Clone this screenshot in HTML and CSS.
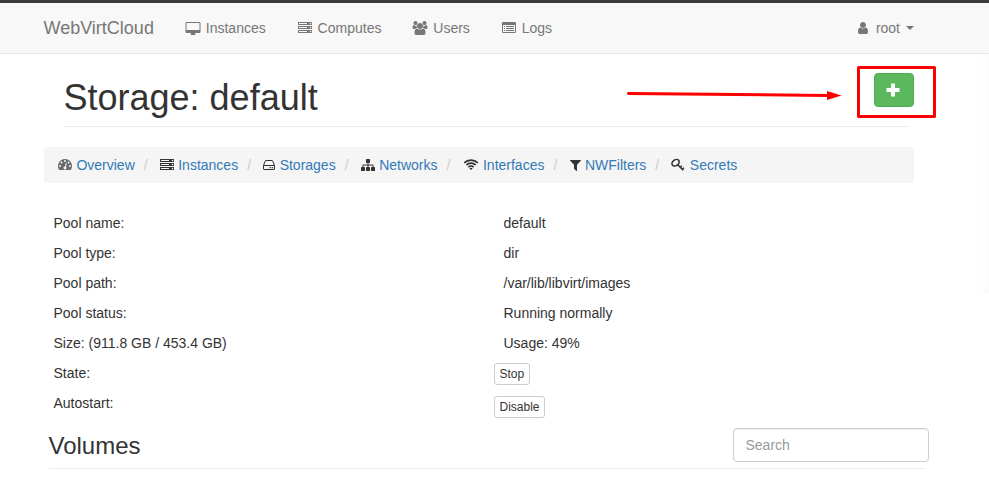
FILE: index.html
```html
<!DOCTYPE html>
<html lang="en">
<head>
<meta charset="utf-8">
<title>WebVirtCloud</title>
<link rel="stylesheet" href="styles.css">
</head>
<body>
<svg class="symbols" aria-hidden="true">
  <symbol id="server" viewBox="0 0 1792 1792"><path d="M128 1408h1024v-128h-1024v128zm0-512h1024v-128h-1024v128zm1568 448q0-40-28-68t-68-28-68 28-28 68 28 68 68 28 68-28 28-68zm-1568-960h1024v-128h-1024v128zm1568 448q0-40-28-68t-68-28-68 28-28 68 28 68 68 28 68-28 28-68zm0-512q0-40-28-68t-68-28-68 28-28 68 28 68 68 28 68-28 28-68zm96 832v384h-1792v-384h1792zm0-512v384h-1792v-384h1792zm0-512v384h-1792v-384h1792z"/></symbol>
</svg>
<nav class="navbar">
  <a class="brand">WebVirtCloud</a>
  <ul class="menu">
    <li><svg class="icon fixed" viewBox="0 0 1920 1792"><path transform="translate(64 128)" d="M1728 992v-832q0-13-9.500-22.500t-22.500-9.500h-1600q-13 0-22.500 9.500t-9.500 22.500v832q0 13 9.500 22.500t22.500 9.500h1600q13 0 22.500-9.500t9.500-22.500zm128-832v1088q0 66-47 113t-113 47h-544q0 37 16 77.500t32 71 16 43.500q0 26-19 45t-45 19h-512q-26 0-45-19t-19-45q0-14 16-44t32-70 16-78h-544q-66 0-113-47t-47-113v-1088q0-66 47-113t113-47h1600q66 0 113 47t47 113z"/></svg> Instances</li>
    <li><svg class="icon fixed"><use href="#server"/></svg> Computes</li>
    <li><svg class="icon fixed" viewBox="0 0 1920 1792"><path d="M593 896q-162 5-265 128h-134q-82 0-138-40.500t-56-118.500q0-353 124-353 6 0 43.500 21t97.500 42.500 119 21.500q67 0 133-23-5 37-5 66 0 139 81 256zm1071 637q0 120-73 189.500t-194 69.500h-874q-121 0-194-69.500t-73-189.500q0-53 3.500-103.500t14-109 26.500-108.500 43-97.500 62-81 85.500-53.500 111.500-20q10 0 43 21.500t73 48 107 48 135 21.500 135-21.500 107-48 73-48 43-21.500q61 0 111.500 20t85.500 53.500 62 81 43 97.500 26.500 108.500 14 109 3.500 103.500zm-1024-1277q0 106-75 181t-181 75-181-75-75-181 75-181 181-75 181 75 75 181zm704 384q0 159-112.500 271.500t-271.500 112.500-271.500-112.500-112.500-271.500 112.500-271.500 271.500-112.500 271.500 112.500 112.500 271.500zm576 225q0 78-56 118.500t-138 40.500h-134q-103-123-265-128 81-117 81-256 0-29-5-66 66 23 133 23 59 0 119-21.500t97.500-42.500 43.500-21q124 0 124 353zm-128-609q0 106-75 181t-181 75-181-75-75-181 75-181 181-75 181 75 75 181z"/></svg> Users</li>
    <li><svg class="icon fixed" viewBox="0 0 14 14"><path fill-rule="evenodd" d="M1.200 1h11.600q1.200 0 1.200 1.200v8.600q0 1.200-1.200 1.200h-11.600q-1.200 0-1.200-1.200v-8.600q0-1.200 1.200-1.200zM1 4v6.800q0 .2.200.2h11.600q.2 0 .2-.2v-6.800zM2 5h1v1h-1zM4 5h8v1h-8zM2 7h1v1h-1zM4 7h8v1h-8zM2 9h1v1h-1zM4 9h8v1h-8z"/></svg> Logs</li>
  </ul>
  <div class="account"><svg class="icon w10" viewBox="256 0 1280 1792"><path d="M1536 1399q0 109-62.500 187t-150.500 78h-854q-88 0-150.500-78t-62.500-187q0-85 8.500-160.500t31.500-152 58.500-131 94-89 134.500-34.500q131 128 313 128t313-128q76 0 134.500 34.500t94 89 58.500 131 31.500 152 8.500 160.500zm-256-887q0 159-112.500 271.500t-271.500 112.500-271.500-112.500-112.500-271.500 112.500-271.500 271.500-112.500 271.500 112.500 112.500 271.500z"/></svg><span class="account-name">root</span><span class="caret"></span></div>
</nav>
<main>
  <header class="page-header">
    <h1>Storage: default</h1>
    <button class="btn-add" aria-label="Add volume"><svg width="14" height="14" viewBox="0 0 14 14"><path d="M5 .5h4v4.500h4.500v4h-4.500v4.500h-4v-4.500h-4.500v-4h4.500z"/></svg></button>
  </header>
  <ol class="breadcrumb">
    <li><svg class="icon w14 muted" viewBox="0 0 14 14"><path fill-rule="evenodd" d="M7 1a7 7 0 0 1 5.900 10.760q-.2.240-.5.240h-10.800q-.3 0-.5-.240a7 7 0 0 1 5.900-10.760zM1 8a1 1 0 1 0 2 0a1 1 0 1 0-2 0zM2.500 4.500a1 1 0 1 0 2 0a1 1 0 1 0-2 0zM6 3a1 1 0 1 0 2 0a1 1 0 1 0-2 0zM9.500 4.500a1 1 0 1 0 2 0a1 1 0 1 0-2 0zM11 8a1 1 0 1 0 2 0a1 1 0 1 0-2 0zM7.700 5.400l-.8 3a1.500 1.500 0 1 0 1 .3l.8-3q0-.5-.4-.6t-.6.300z"/></svg> <a>Overview</a></li>
    <li><svg class="icon w14"><use href="#server"/></svg> <a>Instances</a></li>
    <li><svg class="icon w12" viewBox="0 0 12 14"><path fill="none" stroke="currentColor" d="M.5 7.500v3.500q0 .500.500.500h10q.500 0 .500-.500v-3.500zl1.700-4.500q.2-.5.800-.5h6q.6 0 .8.500l1.700 4.500"/><path d="M6.500 9h1.200v1.200h-1.200zM8.700 9h1.200v1.200h-1.200z"/></svg> <a>Storages</a></li>
    <li><svg class="icon w14" viewBox="0 0 1792 1792"><path d="M1792 1248v320q0 40-28 68t-68 28h-320q-40 0-68-28t-28-68v-320q0-40 28-68t68-28h96v-192h-512v192h96q40 0 68 28t28 68v320q0 40-28 68t-68 28h-320q-40 0-68-28t-28-68v-320q0-40 28-68t68-28h96v-192h-512v192h96q40 0 68 28t28 68v320q0 40-28 68t-68 28h-320q-40 0-68-28t-28-68v-320q0-40 28-68t68-28h96v-192q0-52 38-90t90-38h512v-192h-96q-40 0-68-28t-28-68v-320q0-40 28-68t68-28h320q40 0 68 28t28 68v320q0 40-28 68t-68 28h-96v192h512q52 0 90 38t38 90v192h96q40 0 68 28t28 68z"/></svg> <a>Networks</a></li>
    <li><svg class="icon w16" viewBox="0 0 15 14"><g fill="none" stroke="currentColor" stroke-width="1.700"><path d="M.7 4.900a9.600 9.600 0 0 1 13.600 0"/><path d="M2.800 7a6.600 6.600 0 0 1 9.400 0"/><path d="M4.900 9.100a3.700 3.700 0 0 1 5.200 0"/></g><path d="M7.500 12l-1.600-1.600a2.300 2.300 0 0 1 3.200 0z"/></svg> <a>Interfaces</a></li>
    <li><svg class="icon w11" viewBox="192 0 1408 1792"><path d="M1595 295q17 41-14 70l-493 493v742q0 42-39 59-13 5-25 5-27 0-45-19l-256-256q-19-19-19-45v-486l-493-493q-31-29-14-70 17-39 59-39h1280q42 0 59 39z"/></svg> <a>NWFilters</a></li>
    <li><svg class="icon w14" viewBox="0 0 14 14"><g fill="none" stroke="currentColor" stroke-width="1.600"><ellipse cx="4.600" cy="4.700" rx="3.900" ry="2.900" transform="rotate(-35 4.600 4.700)"/><path d="M6.500 6.500l5.800 5.800M8.700 9.800l2.100-2.100M10.800 11.900l2.100-2.100"/></g></svg> <a>Secrets</a></li>
  </ol>
  <dl class="details">
    <dt>Pool name:</dt><dd>default</dd>
    <dt>Pool type:</dt><dd>dir</dd>
    <dt>Pool path:</dt><dd>/var/lib/libvirt/images</dd>
    <dt>Pool status:</dt><dd>Running normally</dd>
    <dt>Size: (911.8 GB / 453.4 GB)</dt><dd>Usage: 49%</dd>
    <dt>State:</dt><dd class="action"><button class="btn-xs">Stop</button></dd>
    <dt>Autostart:</dt><dd class="action last"><button class="btn-xs">Disable</button></dd>
  </dl>
  <section class="volumes">
    <h2>Volumes</h2>
    <input class="search" type="text" placeholder="Search">
  </section>
</main>
<div class="edge-shade"></div>
<svg class="callout" width="989" height="130" viewBox="0 0 989 130" aria-hidden="true">
  <path class="callout-line" d="M628.500 93.500L828 95.500"/>
  <path class="callout-head" d="M827 91l14.500 4.600L827 100z"/>
  <rect class="callout-line" x="858.500" y="67.500" width="76" height="49"/>
</svg>
</body>
</html>
```
FILE: styles.css
```css
* { box-sizing: border-box; }
body {
  margin: 0;
  height: 496px;
  overflow: hidden;
  background: #fff;
  color: #333;
  font: 14px/20px "Liberation Sans", Arial, sans-serif;
}
ul, ol, dl, dd, h1, h2 { margin: 0; padding: 0; list-style: none; font-weight: 400; }
.symbols { position: absolute; width: 0; height: 0; }
.icon { height: 14px; vertical-align: -2px; fill: currentColor; overflow: visible; }
.w10 { width: 10px; }
.w11 { width: 11px; }
.w12 { width: 12px; }
.w14 { width: 14px; }
.w16 { width: 16px; }
.fixed { width: 18px; }
.muted { color: #6b6b6b; }

.navbar {
  display: flex;
  height: 54px;
  padding: 0 75px 0 43.500px;
  border-top: 3px solid #3c3a3b;
  border-bottom: 1px solid #e7e7e7;
  background: #f8f8f8;
  color: #777;
}
.brand { padding: 15px 15px 15px 0; font-size: 18px; }
.menu { display: flex; }
.menu li { padding: 15px; white-space: nowrap; }
.account { display: flex; align-items: center; margin-left: auto; }
.account-name { margin: 0 6px 0 8px; }
.caret { border-top: 4px solid; border-left: 4px solid transparent; border-right: 4px solid transparent; }

.page-header {
  display: flex;
  justify-content: space-between;
  height: 73px;
  width: 846px;
  margin-left: 63.500px;
  border-bottom: 1px solid #eee;
}
.page-header h1 { padding-top: 24px; font-size: 36px; line-height: 40px; }
.btn-add {
  display: flex;
  align-items: center;
  justify-content: center;
  width: 40px;
  height: 34px;
  margin: 19px -4.500px 0 0;
  padding: 0 2px 1px 0;
  border: 1px solid #4cae4c;
  border-radius: 4px;
  background: #5cb85c;
  fill: #fff;
}
.breadcrumb {
  display: flex;
  width: 870px;
  height: 36px;
  margin: 20px 0 0 44px;
  padding: 8px 14px;
  border-radius: 4px;
  background: #f5f5f5;
}
.breadcrumb li { white-space: nowrap; }
.breadcrumb .icon { margin-right: .5px; }
.breadcrumb li + li::before { content: "/"; padding: 0 12.200px 0 9px; color: #ccc; }
.breadcrumb a { color: #337ab7; }

.details {
  display: grid;
  grid-template-columns: 450px 400px;
  grid-auto-rows: 30px;
  margin: 30px 0 0 53.500px;
}
.action { display: flex; align-items: flex-start; margin-left: -9.500px; }
.last { padding-top: 3px; }
.btn-xs {
  height: 22px;
  padding: 1px 4.500px;
  border: 1px solid #ccc;
  border-radius: 3px;
  background: #fff;
  color: #333;
  font: 12px/18px "Liberation Sans", Arial, sans-serif;
}
.volumes {
  display: flex;
  justify-content: space-between;
  width: 876px;
  height: 46px;
  margin: 0 0 0 48.500px;
  border-bottom: 1px solid #eee;
}
.volumes h2 { padding-top: 9px; font-size: 24px; line-height: 28px; }
.search {
  width: 196px;
  height: 34px;
  margin: 5px -4.500px 0 0;
  padding: 6px 11.500px;
  border: 1px solid #ccc;
  border-radius: 4px;
  box-shadow: inset 0 1px 1px rgba(0, 0, 0, .075);
  font: inherit;
}
.search::placeholder { color: #999; }

.edge-shade {
  position: absolute;
  right: 0;
  top: 54px;
  width: 10px;
  height: 240px;
  background: linear-gradient(to right, transparent, rgba(0, 0, 0, .015));
}
.callout { position: absolute; left: 0; top: 0; pointer-events: none; }
.callout-line { fill: none; stroke: #f00; stroke-width: 3; stroke-linecap: round; stroke-linejoin: round; }
.callout-head { fill: #f00; }
```
